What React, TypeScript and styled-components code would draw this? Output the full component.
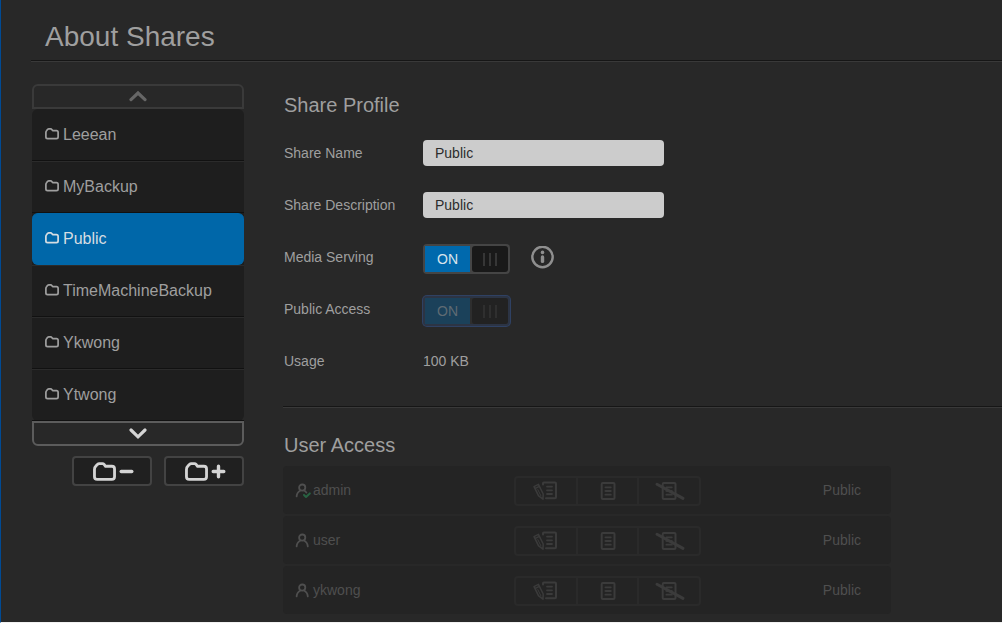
import React, { useState } from 'react';
import styled, { createGlobalStyle, css } from 'styled-components';

const GlobalStyle = createGlobalStyle`
  *, *::before, *::after { box-sizing: border-box; }
  body {
    margin: 0;
    background: #282828;
    color: #9f9f9f;
    font: 14px/20px "Liberation Sans", Arial, sans-serif;
  }
  button, input { font: inherit; color: inherit; }
  h1, h2, ul { margin: 0; padding: 0; font-weight: normal; }
`;

const Page = styled.div`
  height: 100vh;
  overflow: hidden;
  padding-left: 30px;
  border-left: 1px solid #004a94;
  border-bottom: 1px solid #f2f2f2;
`;

const ruled = css`
  border-bottom: 1px solid #161616;
  box-shadow: 0 1px 0 #393939;
`;

const Header = styled.header`
  ${ruled}
  padding: 21px 14px 7px;
`;

const Title = styled.h1`
  font-size: 28px;
  line-height: 32px;
`;

const Columns = styled.div`
  display: flex;
  gap: 39px;
  padding: 23px 0 0 1px;
`;

const Sidebar = styled.nav`
  flex: 0 0 212px;
`;

const ScrollButton = styled.button<{ $end: 'top' | 'bottom' }>`
  display: flex;
  align-items: center;
  justify-content: center;
  width: 100%;
  height: 25px;
  padding: 0;
  background: #282828;
  border: 2px solid ${(p) => (p.$end === 'top' ? '#3a3a3a' : '#5c5c5c')};
  border-radius: ${(p) => (p.$end === 'top' ? '6px 6px 0 0' : '0 0 6px 6px')};
  color: ${(p) => (p.$end === 'top' ? '#666' : '#d4d4d4')};
`;

const ShareList = styled.ul`
  list-style: none;
  background: #1e1e1e;
  border-radius: 6px;
`;

const ShareItem = styled.button<{ $selected: boolean }>`
  display: flex;
  align-items: center;
  gap: 4px;
  width: 100%;
  height: 52px;
  padding: 0 13px;
  font-size: 16px;
  text-align: left;
  background: transparent;
  border: solid transparent;
  border-width: 1px 0;
  border-top-color: #2b2b2b;
  border-bottom-color: #111;
  li:first-child > & { border-top-color: transparent; }
  ${(p) =>
    p.$selected &&
    css`
      background: #0067a9;
      border-color: #0067a9;
      border-radius: 6px;
      color: #d6dde2;
    `}
`;

const Actions = styled.div`
  display: flex;
  justify-content: flex-end;
  gap: 12px;
  padding-top: 10px;
`;

const ActionButton = styled.button`
  display: flex;
  align-items: center;
  justify-content: center;
  gap: 3px;
  width: 80px;
  height: 30px;
  padding: 0 0 0 2px;
  background: #202020;
  border: 2px solid #434343;
  border-radius: 4px;
  color: #d4d4d4;
`;

const Content = styled.main`
  flex: 1;
  min-width: 0;
`;

const Profile = styled.section`
  ${ruled}
  padding: 9px 0 19px 1px;
`;

const Access = styled.section`
  padding-top: 26px;
`;

const SectionTitle = styled.h2`
  font-size: 20px;
  line-height: 24px;
  ${Access} > & { padding-left: 1px; }
`;

const Fields = styled.div`
  padding-top: 10px;
`;

const Field = styled.div`
  display: grid;
  grid-template-columns: 139px 1fr;
  align-items: center;
  height: 52px;
`;

const Controls = styled.div`
  display: flex;
  align-items: center;
  gap: 21px;
`;

const TextInput = styled.input`
  width: 241px;
  height: 26px;
  padding: 0 12px;
  background: #ccc;
  border: 0;
  border-radius: 4px;
  color: #2c2c2c;
  outline: 0;
`;

const Switch = styled.span<{ $disabled: boolean }>`
  position: relative;
  display: flex;
  width: 87px;
  height: 30px;
  margin-top: 4px;
  background: ${(p) => (p.$disabled ? '#2e2e2e' : '#454545')};
  border: 2px solid ${(p) => (p.$disabled ? '#2c3444' : '#454545')};
  border-radius: 4px;
  gap: 2px;
  ${(p) => p.$disabled && 'box-shadow: 0 0 0 1px #2f4163;'}
`;

const SwitchInput = styled.input`
  position: absolute;
  inset: 0;
  width: 100%;
  height: 100%;
  margin: 0;
  opacity: 0;
`;

const SwitchText = styled.span<{ $disabled: boolean }>`
  flex: 0 0 45px;
  text-align: center;
  line-height: 26px;
  background: ${(p) => (p.$disabled ? '#1b415a' : '#0069ad')};
  color: ${(p) => (p.$disabled ? '#5f6b73' : '#d9e4ec')};
`;

const SwitchHandle = styled.span<{ $disabled: boolean }>`
  flex: 1;
  display: flex;
  align-items: center;
  justify-content: center;
  gap: 4px;
  background: ${(p) => (p.$disabled ? '#222' : '#191919')};
  border-radius: 3px;
  &::before, &::after, & > i {
    content: '';
    width: 2px;
    height: 13px;
    background: ${(p) => (p.$disabled ? '#2f2f2f' : '#363636')};
  }
`;

const InfoButton = styled.button`
  display: flex;
  padding: 0;
  border: 0;
  background: none;
  color: #8f8f8f;
`;

const UserTable = styled.table`
  width: 100%;
  max-width: 608px;
  margin-top: 7px;
  table-layout: fixed;
  border-spacing: 0 2px;
  color: #4f4f4f;
`;

const Cell = styled.td<{ $width?: number }>`
  ${(p) => p.$width && `width: ${p.$width}px;`}
  height: 48px;
  padding: 0;
  background: #242424;
  &:first-child { padding-left: 12px; border-radius: 4px 0 0 4px; }
  &:last-child { padding-right: 30px; border-radius: 0 4px 4px 0; text-align: right; }
`;

const UserName = styled.span`
  display: flex;
  align-items: center;
  gap: 2px;
`;

const Rights = styled.span`
  display: flex;
  width: 187px;
  height: 30px;
  margin-top: 2px;
  border: 2px solid #2a2a2a;
  border-radius: 4px;
`;

const RightButton = styled.button`
  flex: 1;
  display: flex;
  align-items: center;
  justify-content: center;
  padding: 0;
  border: 0;
  background: none;
  color: #3b3b3b;
  & + & { border-left: 2px solid #2a2a2a; }
`;

const FOLDER =
  'M1.4 7 Q1.4 5.2 2.6 4 L4.2 2.2 Q5 1.4 6 1.4 H9 Q10 1.4 10.6 2.2 L12 4 H18 Q20.6 4 20.6 6.6 V14 Q20.6 16.6 18 16.6 H4 Q1.4 16.6 1.4 14 Z';

const SmallFolder = () => (
  <svg width="14" height="14" viewBox="0 0 22 22" fill="none" stroke="currentColor" strokeWidth="2.7" strokeLinejoin="round" aria-hidden="true">
    <path d={FOLDER} />
  </svg>
);

const LargeFolder = () => (
  <svg width="23" height="19" viewBox="0 0 22 18" fill="none" stroke="currentColor" strokeWidth="2.7" strokeLinejoin="round" aria-hidden="true">
    <path d={FOLDER} />
  </svg>
);

const Sign = ({ plus }: { plus?: boolean }) => (
  <svg width="15" height="15" viewBox="0 0 15 15" stroke="currentColor" strokeWidth="3.4" strokeLinecap="round" aria-hidden="true">
    <path d={plus ? 'M2.2 7.5H12.8M7.5 2.2V12.8' : 'M2.2 7.5H12.8'} />
  </svg>
);

const Chevron = ({ up }: { up?: boolean }) => (
  <svg width="18" height="14" viewBox="0 0 18 14" fill="none" stroke="currentColor" strokeWidth="3.2" strokeLinecap="round" aria-hidden="true">
    <path d={up ? 'M2 9.6L9 3L16 9.6' : 'M2 3L9 9.8L16 3'} />
  </svg>
);

const InfoIcon = () => (
  <svg width="23" height="23" viewBox="0 0 23 23" fill="none" stroke="currentColor" aria-hidden="true">
    <circle cx="11.5" cy="11" r="10.2" strokeWidth="2.4" />
    <circle cx="11.5" cy="6.4" r="1.8" fill="currentColor" stroke="none" />
    <path d="M11.5 11V15.4" strokeWidth="3.4" strokeLinecap="round" />
  </svg>
);

const UserIcon = ({ admin }: { admin?: boolean }) => (
  <svg width="16" height="16" viewBox="0 0 16 16" fill="none" stroke="currentColor" strokeWidth="1.8" strokeLinecap="round" strokeLinejoin="round" aria-hidden="true">
    <circle cx="7.2" cy="5.6" r="3.1" />
    <path d={admin ? 'M1.6 14.4C1.8 11.6 3.2 9.6 5.4 8.5M9 8.5C10 9 10.8 9.6 11.4 10.6' : 'M1.6 14.4C1.8 11.6 3.2 9.6 5.4 8.5M9 8.5C11.2 9.6 12.6 11.6 12.8 14.4'} />
    {admin && <path d="M9 13L11 15L14.8 11.4" stroke="#286242" strokeWidth="2" />}
  </svg>
);

const DocumentIcon = ({ kind }: { kind: Right }) => (
  <svg width="30" height="20" viewBox="0 0 30 20" overflow="visible" fill="none" stroke="currentColor" strokeWidth="2" strokeLinecap="round" strokeLinejoin="round" aria-hidden="true">
    {kind === 'write' ? (
      <>
        <path d="M12 3.4V2.2Q12 1.4 12.8 1.4H24Q25 1.4 25 2.4V16.2Q25 17.2 24 17.2H15" />
        <path d="M16 5.6H21M16 9.3H21M16 13H21" strokeWidth="1.8" />
        <path d="M3 5.6L7.4 3.4L12.2 13L12 18.2L7.6 14.8ZM4 7.6L8.3 5.4" strokeWidth="1.5" />
        <path d="M6.8 8.6L10 15" strokeWidth="1" />
      </>
    ) : (
      <>
        <rect x="8.7" y="2" width="12.8" height="16" rx="1" />
        <path d="M12.4 6.3H17.8M12.4 10H17.8M12.4 13.7H17.8" strokeWidth="1.8" />
      </>
    )}
    {kind === 'none' && <path d="M3 3.2L29 17.4" strokeWidth="3" />}
  </svg>
);

type Right = 'write' | 'read' | 'none';

const RIGHTS: { kind: Right; label: string }[] = [
  { kind: 'write', label: 'Full access' },
  { kind: 'read', label: 'Read only' },
  { kind: 'none', label: 'No access' },
];

const SHARES = ['Leeean', 'MyBackup', 'Public', 'TimeMachineBackup', 'Ykwong', 'Ytwong'];

const USERS = ['admin', 'user', 'ykwong'];

const Toggle = ({ id, disabled = false }: { id: string; disabled?: boolean }) => (
  <Switch $disabled={disabled}>
    <SwitchText $disabled={disabled}>ON</SwitchText>
    <SwitchHandle $disabled={disabled}>
      <i />
    </SwitchHandle>
    <SwitchInput id={id} type="checkbox" role="switch" defaultChecked disabled={disabled} />
  </Switch>
);

export default function App() {
  const [selected, setSelected] = useState('Public');

  return (
    <>
      <GlobalStyle />
      <Page>
        <Header>
          <Title>About Shares</Title>
        </Header>
        <Columns>
          <Sidebar aria-label="Shares">
            <ScrollButton type="button" $end="top" aria-label="Scroll up">
              <Chevron up />
            </ScrollButton>
            <ShareList>
              {SHARES.map((name) => (
                <li key={name}>
                  <ShareItem type="button" $selected={name === selected} onClick={() => setSelected(name)}>
                    <SmallFolder />
                    {name}
                  </ShareItem>
                </li>
              ))}
            </ShareList>
            <ScrollButton type="button" $end="bottom" aria-label="Scroll down">
              <Chevron />
            </ScrollButton>
            <Actions>
              <ActionButton type="button" aria-label="Remove share">
                <LargeFolder />
                <Sign />
              </ActionButton>
              <ActionButton type="button" aria-label="Add share">
                <LargeFolder />
                <Sign plus />
              </ActionButton>
            </Actions>
          </Sidebar>
          <Content>
            <Profile>
              <SectionTitle>Share Profile</SectionTitle>
              <Fields>
                <Field>
                  <label htmlFor="share-name">Share Name</label>
                  <TextInput id="share-name" type="text" defaultValue="Public" />
                </Field>
                <Field>
                  <label htmlFor="share-description">Share Description</label>
                  <TextInput id="share-description" type="text" defaultValue="Public" />
                </Field>
                <Field>
                  <label htmlFor="media-serving">Media Serving</label>
                  <Controls>
                    <Toggle id="media-serving" />
                    <InfoButton type="button" aria-label="About media serving">
                      <InfoIcon />
                    </InfoButton>
                  </Controls>
                </Field>
                <Field>
                  <label htmlFor="public-access">Public Access</label>
                  <Controls>
                    <Toggle id="public-access" disabled />
                  </Controls>
                </Field>
                <Field>
                  <span>Usage</span>
                  <span>100 KB</span>
                </Field>
              </Fields>
            </Profile>
            <Access>
              <SectionTitle>User Access</SectionTitle>
              <UserTable aria-label="User access">
                <tbody>
                  {USERS.map((user) => (
                    <tr key={user}>
                      <Cell $width={231}>
                        <UserName>
                          <UserIcon admin={user === 'admin'} />
                          {user}
                        </UserName>
                      </Cell>
                      <Cell $width={187}>
                        <Rights>
                          {RIGHTS.map(({ kind, label }) => (
                            <RightButton key={kind} type="button" disabled aria-label={label}>
                              <DocumentIcon kind={kind} />
                            </RightButton>
                          ))}
                        </Rights>
                      </Cell>
                      <Cell>Public</Cell>
                    </tr>
                  ))}
                </tbody>
              </UserTable>
            </Access>
          </Content>
        </Columns>
      </Page>
    </>
  );
}
